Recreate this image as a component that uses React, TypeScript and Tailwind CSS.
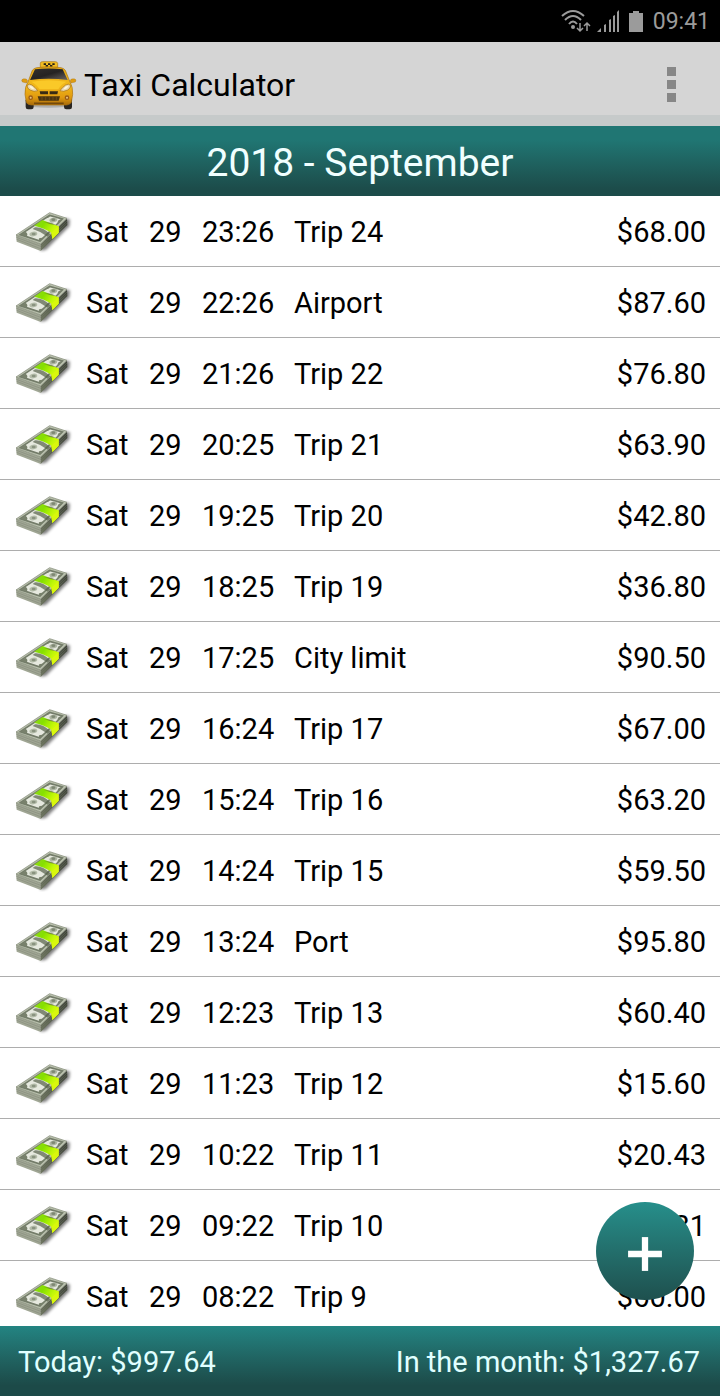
import { Plus } from "lucide-react";

interface Trip {
  day: string;
  date: string;
  time: string;
  name: string;
  amount: string;
}

const trips: Trip[] = [
  { day: "Sat", date: "29", time: "23:26", name: "Trip 24", amount: "$68.00" },
  { day: "Sat", date: "29", time: "22:26", name: "Airport", amount: "$87.60" },
  { day: "Sat", date: "29", time: "21:26", name: "Trip 22", amount: "$76.80" },
  { day: "Sat", date: "29", time: "20:25", name: "Trip 21", amount: "$63.90" },
  { day: "Sat", date: "29", time: "19:25", name: "Trip 20", amount: "$42.80" },
  { day: "Sat", date: "29", time: "18:25", name: "Trip 19", amount: "$36.80" },
  { day: "Sat", date: "29", time: "17:25", name: "City limit", amount: "$90.50" },
  { day: "Sat", date: "29", time: "16:24", name: "Trip 17", amount: "$67.00" },
  { day: "Sat", date: "29", time: "15:24", name: "Trip 16", amount: "$63.20" },
  { day: "Sat", date: "29", time: "14:24", name: "Trip 15", amount: "$59.50" },
  { day: "Sat", date: "29", time: "13:24", name: "Port", amount: "$95.80" },
  { day: "Sat", date: "29", time: "12:23", name: "Trip 13", amount: "$60.40" },
  { day: "Sat", date: "29", time: "11:23", name: "Trip 12", amount: "$15.60" },
  { day: "Sat", date: "29", time: "10:22", name: "Trip 11", amount: "$20.43" },
  { day: "Sat", date: "29", time: "09:22", name: "Trip 10", amount: "$52.31" },
  { day: "Sat", date: "29", time: "08:22", name: "Trip 9", amount: "$60.00" },
];

function TaxiIcon() {
  return (
    <svg viewBox="30 21 174 156" className="w-[58px] h-[52px] shrink-0" aria-hidden="true">
      <defs>
        <linearGradient id="taxi-body" x1="0" y1="0" x2="0" y2="1">
          <stop offset="0" stopColor="#e6ab16" />
          <stop offset="0.5" stopColor="#f2b81a" />
          <stop offset="0.8" stopColor="#e09a10" />
          <stop offset="1" stopColor="#a96c0a" />
        </linearGradient>
        <linearGradient id="taxi-glass" x1="0" y1="0" x2="1" y2="1">
          <stop offset="0" stopColor="#33302e" />
          <stop offset="0.5" stopColor="#252322" />
          <stop offset="1" stopColor="#6b6460" />
        </linearGradient>
      </defs>
      <ellipse cx="116" cy="160" rx="66" ry="7" fill="#8a8a88" opacity="0.5" />
      <rect x="47" y="138" width="24" height="34" rx="7" fill="#292623" />
      <rect x="162" y="138" width="24" height="34" rx="7" fill="#292623" />
      <path d="M91 46V34Q91 29 97 29H136Q142 29 143 34V46Z" fill="#f3bd20" stroke="#a97713" strokeWidth="2" />
      <path d="M101 34h7v5h-7zM114 34h7v5h-7zM127 34h7v5h-7zM107 39h7v5h-7zM120 39h7v5h-7z" fill="#252017" />
      <path d="M35 84Q37 79 49 81L53 86L50 93L37 90ZM198 84Q196 79 184 81L180 86L183 93L196 90Z" fill="#df9c12" stroke="#9d6b0c" strokeWidth="1" />
      <path d="M67 55Q71 49 80 47Q116 42 153 47Q162 49 166 55L180 90Q189 104 188 127L184 151Q181 158 170 159H64Q51 158 49 151L45 127Q44 104 54 90Z" fill="url(#taxi-body)" stroke="#a97110" strokeWidth="2" />
      <path d="M75 52Q116 47 158 52L173 84Q116 76 60 84Z" fill="url(#taxi-glass)" />
      <path d="M64 89Q116 80 169 89Q151 99 145 112H88Q82 99 64 89Z" fill="#fac928" />
      <path d="M51 101Q57 93 66 99Q76 106 83 116Q73 121 60 114Q52 110 51 101ZM182 101Q176 93 167 99Q157 106 150 116Q160 121 173 114Q181 110 182 101Z" fill="#ead9b2" stroke="#a16c10" strokeWidth="2" />
      <path d="M58 102Q67 101 73 112Q62 112 58 102ZM175 102Q166 101 160 112Q171 112 175 102Z" fill="#fff6de" />
      <path d="M89 118h25v9H91zM119 118h25l-2 9h-23z" fill="#382a14" />
      <path d="M83 133H150L146 146H87Z" fill="#4b3411" />
      <path d="M96 134v11M107 134v11M118 134v11M129 134v11M139 134v11" stroke="#7c5413" strokeWidth="2" />
      <circle cx="62" cy="137" r="7" fill="#9a5b17" />
      <circle cx="171" cy="137" r="7" fill="#9a5b17" />
      <circle cx="62" cy="137" r="3" fill="#e9c582" />
      <circle cx="171" cy="137" r="3" fill="#e9c582" />
      <path d="M72 154H161" stroke="#744a0b" strokeWidth="5" />
    </svg>
  );
}

// shared paint for every cash icon in the list
function CashDefs() {
  return (
    <svg width="0" height="0" className="absolute" aria-hidden="true">
      <defs>
        <linearGradient id="cash-band" x1="0" y1="0" x2="1" y2="0.5">
          <stop offset="0" stopColor="#8ed51c" />
          <stop offset="0.4" stopColor="#86e000" />
          <stop offset="0.8" stopColor="#c4f808" />
          <stop offset="1" stopColor="#d6f810" />
        </linearGradient>
        <linearGradient id="cash-side" x1="0" y1="1" x2="1" y2="0">
          <stop offset="0" stopColor="#6d745f" />
          <stop offset="1" stopColor="#3c4137" />
        </linearGradient>
        <filter id="cash-shadow" x="-20%" y="-20%" width="140%" height="140%">
          <feGaussianBlur stdDeviation="4" />
        </filter>
      </defs>
    </svg>
  );
}

function CashIcon() {
  return (
    <svg viewBox="15 12 180 132" className="w-[60px] h-[44px] shrink-0" aria-hidden="true">
      <path d="M92 137L108 134L178 64L180 44L168 40L90 118Z" fill="#000" opacity="0.5" filter="url(#cash-shadow)" />
      <path d="M18 90L92 117V138L20 110Z" fill="#a0a694" />
      <path d="M19 97L92 124M20 103L92 131" stroke="#868d7b" strokeWidth="2" />
      <path d="M92 117L171 41L172 60L92 138Z" fill="url(#cash-side)" />
      <path d="M92 124L171 48M92 131L171 55" stroke="#7d8571" strokeWidth="1" />
      <path d="M18 90L119 23L171 40L92 117Z" fill="#b9c0ad" stroke="#7d8571" strokeWidth="2" />
      <path d="M31 89L119 31L157 42L90 108Z" fill="#e6e9df" stroke="#737c69" strokeWidth="5" />
      <path d="M46 80Q56 86 50 94L31 89ZM90 108Q80 98 97 98L110 89ZM119 31Q122 39 106 40ZM157 42Q141 43 143 56Z" fill="#78816c" />
      <ellipse cx="70" cy="87" rx="12" ry="7" transform="rotate(-12 70 87)" fill="#b4bca9" />
      <ellipse cx="71" cy="87" rx="6" ry="4" fill="#89937f" />
      <ellipse cx="130" cy="45" rx="12" ry="7" transform="rotate(-12 130 45)" fill="#acb4a1" />
      <ellipse cx="130" cy="44" rx="6" ry="4" fill="#7e8873" />
      <path d="M72 62L97 45L146 64L146 83L127 102L124 83Q101 68 72 62Z" fill="url(#cash-band)" />
      <path d="M124 83L146 64V83L127 102Z" fill="#d9f80c" />
      <path d="M75 67Q98 65 121 88L113 95Q94 80 68 72Z" fill="#555f49" opacity="0.7" />
      <path d="M103 51L125 53L139 61Q122 60 103 51Z" fill="#555f43" opacity="0.6" />
    </svg>
  );
}

function StatusBar() {
  return (
    <div className="h-[42px] shrink-0 bg-black px-[10px] flex items-center justify-end text-[#9b9b9b]">
      <svg viewBox="0 0 86 24" className="w-[86px] h-6 mr-[6px]" aria-hidden="true">
        <g fill="none" stroke="currentColor" strokeWidth="2">
          <path d="M1 7Q12 -3 23 7" />
          <path d="M4 11Q12 3 20 11" />
          <path d="M8 15Q12 10 16 15" />
          <path d="M19 14V22M16 19L19 22L22 19M26 22V14M23 17L26 14L29 17" strokeWidth="1.5" />
        </g>
        <circle cx="12" cy="18" r="2" fill="currentColor" />
        <path d="M36 23L40 19V23ZM43 16L45 15V23H43ZM48 11L50 10V23H48ZM52 7L54 6V23H52ZM56 3L58 1V23H56Z" fill="currentColor" />
        <path d="M68 4H72V2H78V4H82V23H68Z" fill="currentColor" />
      </svg>
      <time className="pt-[2px] text-[23px]">09:41</time>
    </div>
  );
}

function TripRow({ trip }: { trip: Trip }) {
  return (
    <li className="h-[71px] shrink-0 border-b border-[#adadad] pl-[15px] pr-[14px] flex items-center text-[29px] text-black">
      <CashIcon />
      <div className="flex-1 flex pt-1 pl-[11px]">
        <span className="w-[63px]">{trip.day}</span>
        <span className="w-[53px]">{trip.date}</span>
        <span className="w-[92px]">{trip.time}</span>
        <span className="flex-1">{trip.name}</span>
        <span>{trip.amount}</span>
      </div>
    </li>
  );
}

export default function App() {
  return (
    <div className="relative h-screen flex flex-col overflow-hidden bg-white font-[Roboto,sans-serif]">
      <CashDefs />
      <StatusBar />
      <header className="h-[84px] shrink-0 bg-[#d5d5d5] border-b-[11px] border-[#c6caca] pl-5 pr-8 flex items-center justify-between">
        <div className="flex items-center gap-[6px] pt-3">
          <TaxiIcon />
          <h1 className="text-[32px] leading-10 text-black">Taxi Calculator</h1>
        </div>
        <button type="button" aria-label="More options" className="px-3 pt-[11px] flex flex-col gap-1">
          <span className="size-[9px] bg-[#878787]" />
          <span className="size-[9px] bg-[#878787]" />
          <span className="size-[9px] bg-[#878787]" />
        </button>
      </header>
      <h2 className="h-[70px] shrink-0 pt-1 bg-linear-to-b from-[#207673] from-20% to-[#1c4c4a] to-90% flex items-center justify-center text-[39px] text-[#f0ffff]">
        2018 - September
      </h2>
      <ul className="flex-1 min-h-0 overflow-hidden flex flex-col">
        {trips.map((trip) => (
          <TripRow key={trip.time} trip={trip} />
        ))}
      </ul>
      <footer className="h-[70px] shrink-0 pt-1 bg-linear-to-b from-[#238482] to-[#1c4a48] to-85% pl-[18px] pr-5 flex items-center justify-between text-[29px] text-[#e0ffff]">
        <span>Today: $997.64</span>
        <span>In the month: $1,327.67</span>
      </footer>
      <button
        type="button"
        aria-label="Add trip"
        className="absolute right-[26px] bottom-24 size-[98px] rounded-full bg-linear-to-b from-[#268f8b] to-[#1e504e] pt-[6px] flex items-center justify-center text-white"
      >
        <Plus className="size-[58px]" strokeWidth={2.6} strokeLinecap="butt" />
      </button>
    </div>
  );
}
